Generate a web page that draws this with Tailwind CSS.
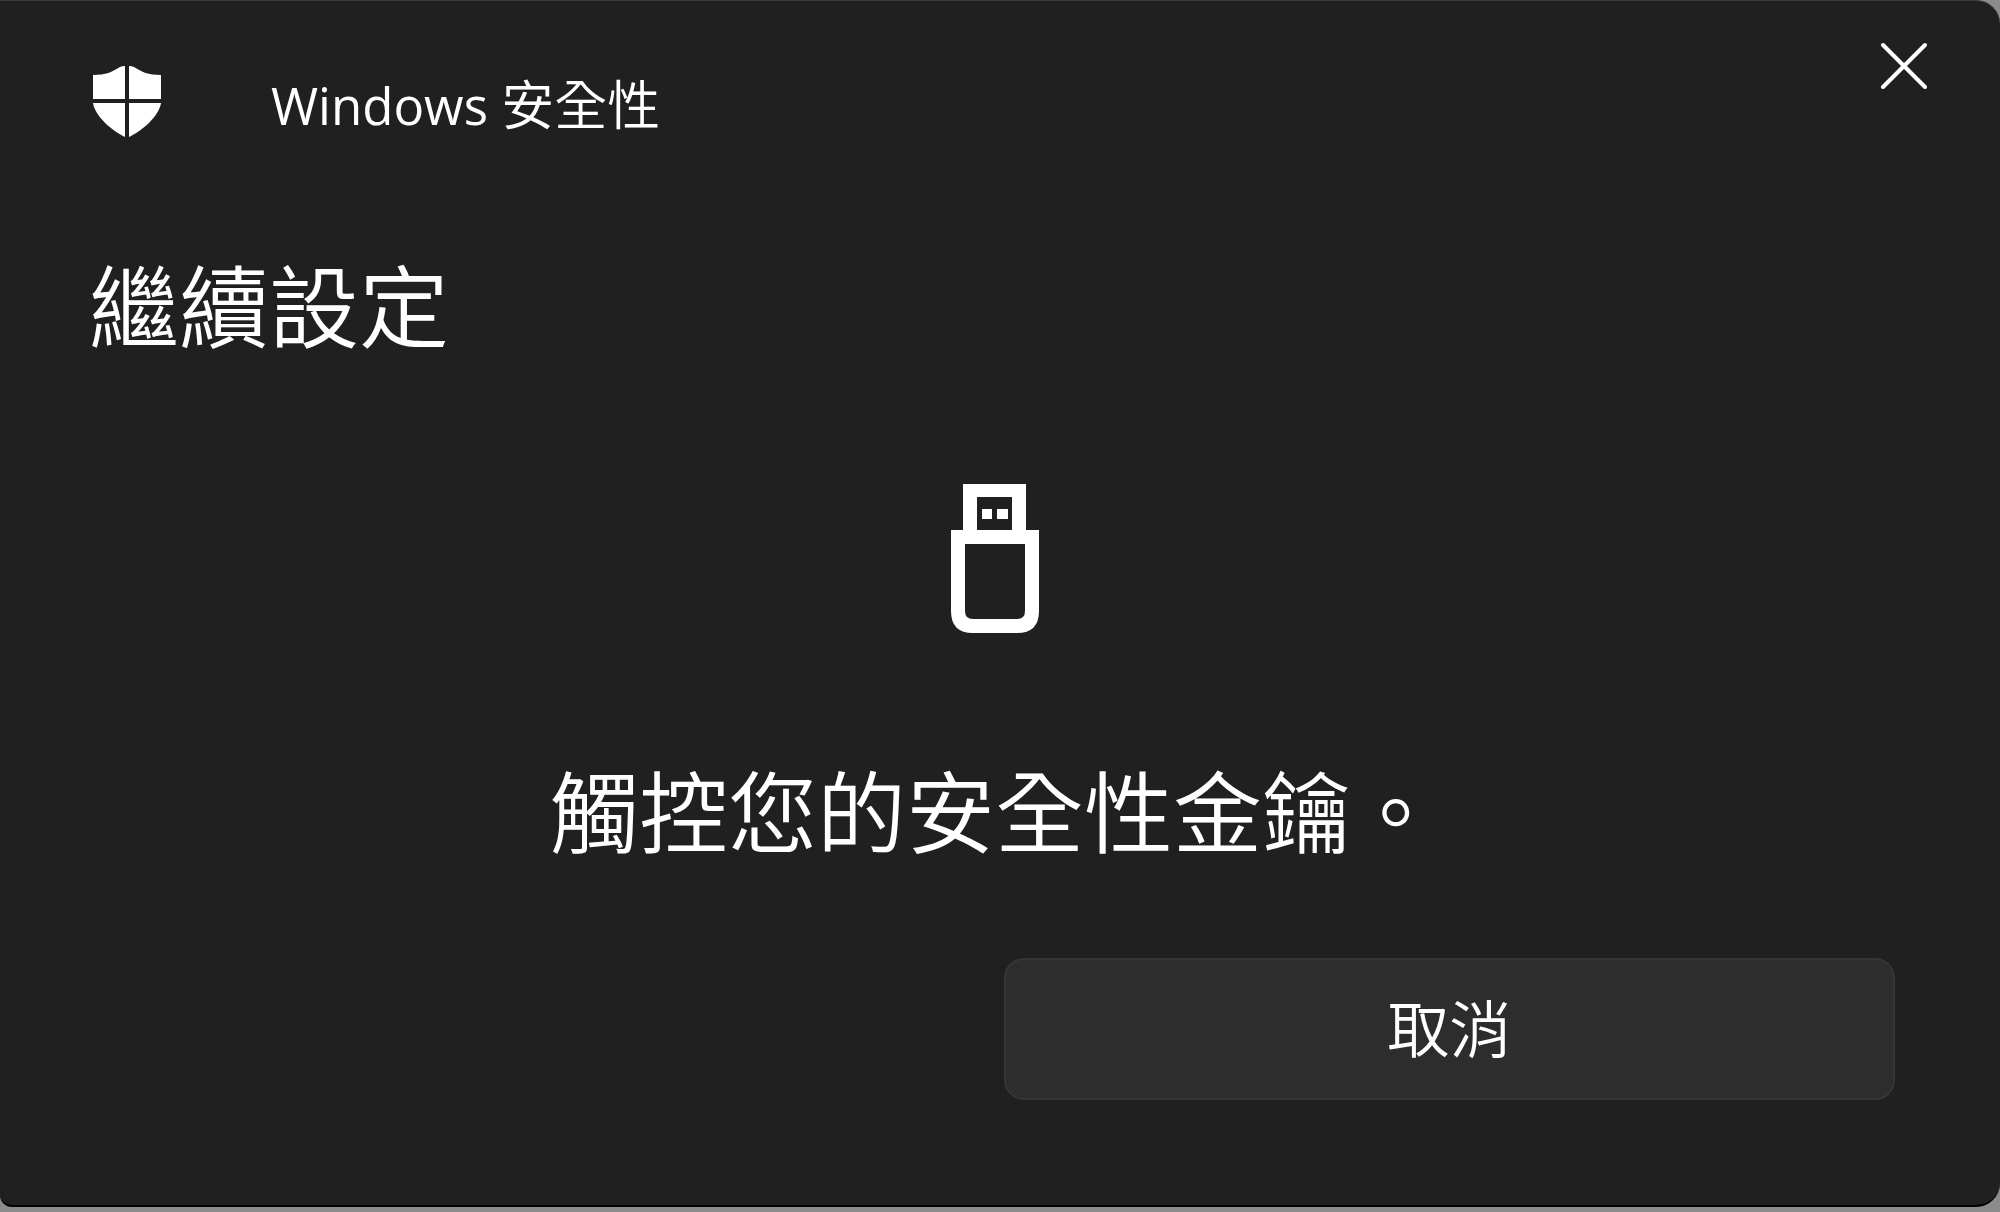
<!DOCTYPE html>
<html lang="zh-Hant">
  <head>
    <meta charset="UTF-8" />
    <meta name="viewport" content="width=device-width, initial-scale=1" />
    <title>Windows 安全性</title>
    <script src="https://cdn.jsdelivr.net/npm/@tailwindcss/browser@4"></script>
  </head>
  <body class="bg-[#8c8c8c] text-white font-[350] font-['Open_Sans','Noto_Sans_CJK_TC',sans-serif]">
    <div class="flex min-h-screen flex-col pb-[5px]">
      <main
        class="flex grow flex-col rounded-tr-3xl rounded-br-3xl rounded-bl-xl border-b-2 border-t border-t-[#3a3a3a] border-b-black bg-[#202020]"
      >
        <!-- Title bar -->
        <header class="flex items-start justify-between pt-8 pl-[92px] pr-16">
          <div class="flex items-start gap-[109px] pt-8">
            <svg class="mt-px h-[72px] w-[70px]" viewBox="0 0 70 72" fill="#fff" aria-hidden="true">
              <path d="M33 0v33H1V9C14 9 20 6 28 1Q30 0 33 0Z" />
              <path d="M37 0v33h32V9C56 9 50 6 42 1Q40 0 37 0Z" />
              <path d="M1 37h32v34C20 65 3 50 1 37Z" />
              <path d="M69 37H37v34C50 65 67 50 69 37Z" />
            </svg>
            <p class="pt-1 text-[51px] leading-[72px] font-normal">
              Windows <span class="text-[53px] font-[350]">安全性</span>
            </p>
          </div>
          <button type="button" class="p-2" aria-label="關閉">
            <svg class="size-12" viewBox="0 0 48 48" fill="none" stroke="#fff" stroke-width="4" stroke-linecap="round">
              <path d="M3 4l42 42M45 4L3 46" />
            </svg>
          </button>
        </header>

        <h1 class="mt-[105px] pl-[89px] text-[90px] leading-[120px]">繼續設定</h1>

        <!-- Security key prompt -->
        <section class="mt-[118px] flex flex-col items-center pr-[10px]">
          <svg class="h-[149px] w-[88px]" viewBox="0 0 88 149" aria-hidden="true">
            <path
              fill="#fff"
              fill-rule="evenodd"
              d="M12 0h63v46h13v81q0 22-22 22H22q-22 0-22-22V46h12ZM26 13v33h35V13ZM14 60v67q0 8 8 8h44q8 0 8-8V60Z"
            />
            <path fill="#fff" d="M31 25h10v10H31ZM46 25h11v10H46Z" />
          </svg>
          <p class="mt-[119px] text-[89px] leading-[120px]">觸控您的安全性金鑰。</p>
        </section>

        <footer class="mt-auto grid grid-cols-2 gap-5 pl-[92px] pr-[105px] pb-[105px]">
          <button
            type="button"
            class="col-start-2 rounded-[20px] border-2 border-[#353535] bg-[#2d2d2d] py-[29px] text-[62px] leading-[80px]"
          >
            取消
          </button>
        </footer>
      </main>
    </div>
  </body>
</html>
